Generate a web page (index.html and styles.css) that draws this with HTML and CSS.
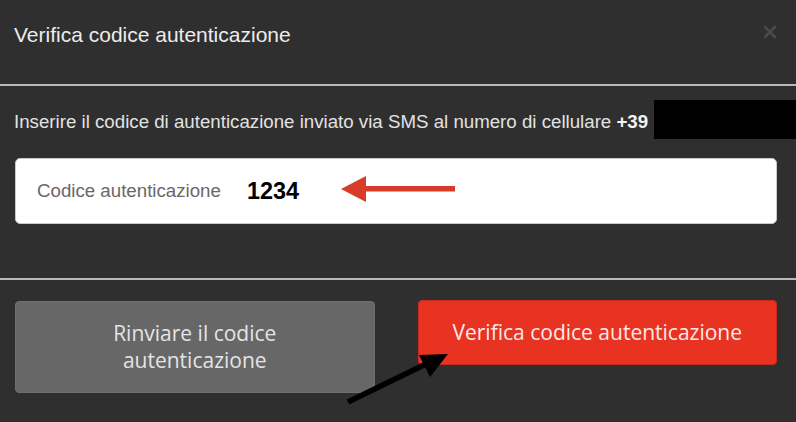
FILE: index.html
```html
<!DOCTYPE html>
<html lang="it">
<head>
  <meta charset="UTF-8">
  <title>Verifica codice autenticazione</title>
  <link rel="stylesheet" href="styles.css">
</head>
<body>
  <div class="modal">
    <div class="modal-header">
      <h3 class="modal-title">Verifica codice autenticazione</h3>
      <button class="close-btn" aria-label="Chiudi">
        <svg width="14" height="14" viewBox="0 0 14 14"><path d="M2 2 L12 12 M12 2 L2 12" stroke="#4a4a4a" stroke-width="2.6" stroke-linecap="round"/></svg>
      </button>
    </div>
    <div class="modal-body">
      <p class="intro">Inserire il codice di autenticazione inviato via SMS al numero di cellulare <strong>+39</strong></p>
      <span class="redact"></span>
      <div class="code-field">
        <span class="code-label">Codice autenticazione</span>
        <span class="code-value">1234</span>
      </div>
    </div>
    <div class="modal-footer">
      <button class="btn btn-grey">Rinviare il codice<br>autenticazione</button>
      <button class="btn btn-red">Verifica codice autenticazione</button>
    </div>
  </div>

  <!-- frecce di annotazione -->
  <svg class="annotations" width="796" height="422" viewBox="0 0 796 422">
    <rect x="364" y="186" width="91" height="5.5" fill="#d93b2a"/>
    <polygon points="341,189 366,176 366,202" fill="#d93b2a"/>
    <line x1="348" y1="402" x2="430" y2="362" stroke="#000" stroke-width="5.5"/>
    <polygon points="448,354 419,355 430,377" fill="#000"/>
  </svg>
</body>
</html>
```

FILE: styles.css
```css
* { box-sizing: border-box; margin: 0; padding: 0; }
body { background: #2f2f2f; font-family: "Liberation Sans", Arial, sans-serif; color: #e6e6e6; position: relative; width: 796px; height: 422px; overflow: hidden; }

.modal { width: 796px; }
.modal-header { height: 84px; display: flex; justify-content: space-between; align-items: flex-start; padding: 23px 19px 0 14px; }
.modal-title { font-weight: normal; font-size: 21px; line-height: 24px; color: #ececec; }
.close-btn { background: none; border: none; margin-top: 2px; cursor: pointer; }

.modal-body { position: relative; border-top: 2px solid #b9b9b9; padding: 25px 19px 54px 15px; }
.intro { font-size: 18.7px; line-height: 22px; color: #e2e2e2; margin-left: -1px; }
.intro strong { color: #f2f2f2; }
.redact { position: absolute; left: 654px; top: 14px; width: 142px; height: 39px; background: #000; }

.code-field { margin-top: 25px; height: 66px; background: #fff; border: 1px solid #c8c8c8; border-radius: 5px;
  display: flex; align-items: center; gap: 26px; padding-left: 21px; }
.code-label { font-size: 18.7px; color: #6c6669; }
.code-value { font-size: 23.4px; font-weight: bold; color: #000; }

.modal-footer { border-top: 2px solid #b9b9b9; padding: 20px 19px 0 15px; display: flex; gap: 43px; align-items: flex-start; }
.btn { flex: 1; font-family: "Open Sans", "Noto Sans", sans-serif; font-size: 21px; line-height: 27px; padding: 18px 20px;
  border-radius: 4px; cursor: pointer; text-align: center; white-space: nowrap; }
.btn-grey { background: #676767; border: 1px solid #6f6f6f; color: #e4e4e4; margin-top: 1px; }
.btn-red { background: #e83323; border: 1px solid #c92a1d; color: #fbe9e7; }

.annotations { position: absolute; left: 0; top: 0; pointer-events: none; }
```
